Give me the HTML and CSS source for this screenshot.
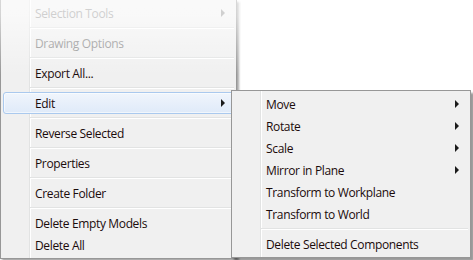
FILE: index.html
```html
<!DOCTYPE html>
<html lang="en">
<head>
    <meta charset="UTF-8">
    <title>Context Menu</title>
    <link rel="stylesheet" href="styles.css">
</head>
<body>
    <div class="stage">
        <div class="menu main-menu">
            <ul class="menu-list">
                <li class="menu-item disabled has-sub">Selection Tools<span class="arrow"></span></li>
                <li class="menu-sep"></li>
                <li class="menu-item disabled">Drawing Options</li>
                <li class="menu-sep"></li>
                <li class="menu-item">Export All...</li>
                <li class="menu-sep"></li>
                <li class="menu-item active has-sub">Edit<span class="arrow"></span></li>
                <li class="menu-sep"></li>
                <li class="menu-item">Reverse Selected</li>
                <li class="menu-sep"></li>
                <li class="menu-item">Properties</li>
                <li class="menu-sep"></li>
                <li class="menu-item">Create Folder</li>
                <li class="menu-sep"></li>
                <li class="menu-item">Delete Empty Models</li>
                <li class="menu-item">Delete All</li>
            </ul>
            <div class="fade"></div>
        </div>

        <div class="menu sub-menu">
            <ul class="menu-list">
                <li class="menu-item has-sub">Move<span class="arrow"></span></li>
                <li class="menu-item has-sub">Rotate<span class="arrow"></span></li>
                <li class="menu-item has-sub">Scale<span class="arrow"></span></li>
                <li class="menu-item has-sub">Mirror in Plane<span class="arrow"></span></li>
                <li class="menu-item">Transform to Workplane</li>
                <li class="menu-item">Transform to World</li>
                <li class="menu-sep"></li>
                <li class="menu-item">Delete Selected Components</li>
            </ul>
        </div>
    </div>
</body>
</html>
```

FILE: styles.css
```css
* {
    margin: 0;
    padding: 0;
    box-sizing: border-box;
}

body {
    background-color: #fff;
    font-family: 'Segoe UI', 'Open Sans', sans-serif;
    font-size: 12px;
    letter-spacing: -0.35px;
    color: #1b0b0b;
}

.stage {
    position: relative;
    width: 473px;
    height: 260px;
}

.menu {
    background-color: #f0f0f0;
    border: 1px solid #979797;
    position: relative;
}

/* left gutter line */
.menu::before {
    content: '';
    position: absolute;
    top: 0;
    bottom: 0;
    left: 28px;
    width: 1px;
    background-color: #e2e3e3;
    box-shadow: 1px 0 0 #fff;
}

.main-menu {
    width: 237px;
    height: 259px;
    border-top: none;
    padding: 2px 2px 1px 2px;
    box-shadow: 2px 2px 2px rgba(0, 0, 0, 0.35);
}

.sub-menu {
    position: absolute;
    left: 231px;
    top: 90px;
    width: 240px;
    height: 168px;
    padding: 2px 2px 1px 2px;
    box-shadow: 3px 3px 2px rgba(0, 0, 0, 0.4);
    z-index: 2;
}

.menu-list {
    list-style: none;
    position: relative;
}

.menu-item {
    position: relative;
    height: 22px;
    line-height: 22px;
    padding-top: 1px;
    padding-left: 32px;
    white-space: nowrap;
}

.menu-item.disabled {
    color: #8d8d8d;
}

.menu-item.active {
    border: 1px solid #aac9ee;
    border-radius: 3px;
    background: linear-gradient(#f0f5fc, #dfeaf9);
    box-shadow: inset 0 0 0 1px rgba(255, 255, 255, 0.55);
    line-height: 20px;
    padding-left: 31px;
}

.menu-sep {
    height: 8px;
    margin-left: 27px;
    position: relative;
}

.menu-sep::after {
    content: '';
    position: absolute;
    left: 0;
    right: 0;
    top: 3px;
    height: 1px;
    background-color: #e2e3e3;
    box-shadow: 0 1px 0 #fff;
}

.arrow {
    position: absolute;
    right: 9px;
    top: 7px;
    width: 0;
    height: 0;
    border-top: 4px solid transparent;
    border-bottom: 4px solid transparent;
    border-left: 4px solid #1b1b1b;
}

.menu-item.active .arrow {
    top: 6px;
    right: 8px;
}

.menu-item.disabled .arrow {
    border-left-color: #8d8d8d;
}

/* menu fading in at the top */
.fade {
    position: absolute;
    left: -1px;
    right: -4px;
    top: 0;
    height: 75px;
    background: linear-gradient(rgba(255, 255, 255, 0.62) 0, rgba(255, 255, 255, 0.58) 16px, rgba(255, 255, 255, 0) 75px);
}
```
